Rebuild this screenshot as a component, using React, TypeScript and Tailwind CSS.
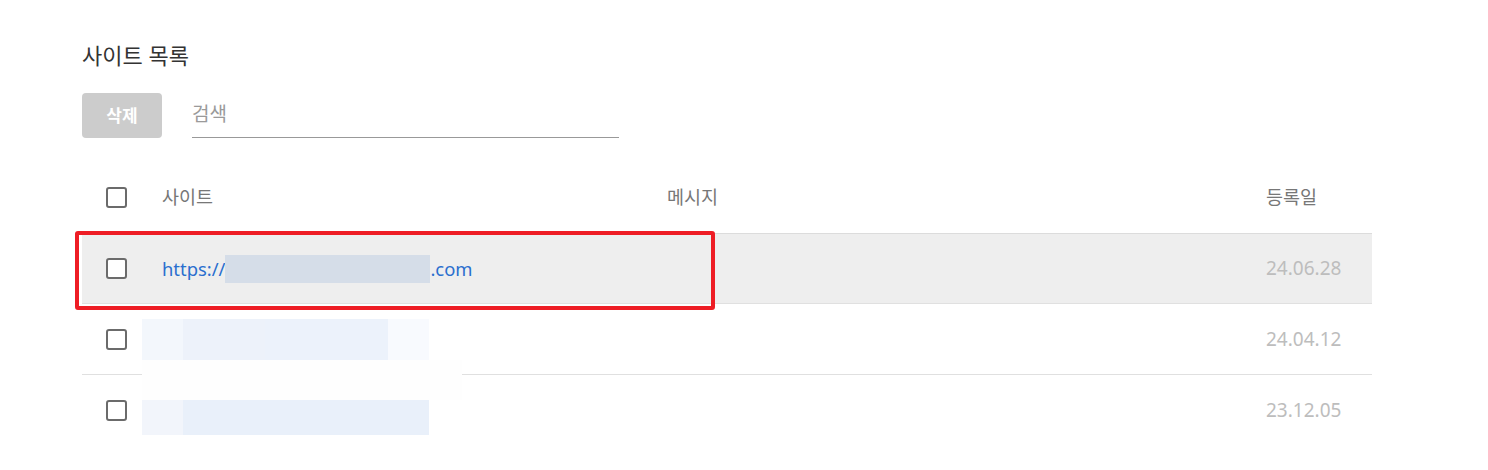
import React from 'react';

const font = { fontFamily: '"Noto Sans", "Noto Sans CJK KR", sans-serif' };

const Checkbox = () => (
  <span className="block w-[21px] h-[21px] border-2 border-[#6b6b6b] rounded-[3px] bg-white" />
);

type Row = { date: string; selected?: boolean };

const rows: Row[] = [
  { date: '24.06.28', selected: true },
  { date: '24.04.12' },
  { date: '23.12.05' },
];

export default function App() {
  return (
    <div className="w-[1488px] h-[470px] bg-white overflow-hidden" style={font}>
      <div className="pl-[82px] pr-[116px] pt-[39px]">
        <h2 className="text-[22px] leading-[32px] text-[#333]">사이트 목록</h2>

        {/* toolbar */}
        <div className="flex items-end gap-[30px] mt-[22px]">
          <button className="w-[80px] h-[45px] rounded-[4px] bg-[#cccccc] text-white text-[17px] font-bold">
            삭제
          </button>
          <div className="w-[427px] h-[45px] border-b border-[#999] flex items-center">
            <span className="text-[19px] text-[#9a9a9a] -mt-[1px]">검색</span>
          </div>
        </div>

        {/* table */}
        <div className="mt-[23px]">
          <div className="flex items-center h-[72px] text-[18.5px] text-[#777]">
            <div className="w-[80px] pl-[24px]">
              <Checkbox />
            </div>
            <div className="w-[505px]">사이트</div>
            <div className="w-[599px]">메시지</div>
            <div className="flex-1">등록일</div>
          </div>

          {rows.map((r, i) => (
            <div
              key={i}
              className={`relative flex items-center h-[71px] ${i < rows.length - 1 ? 'border-b border-[#e0e0e0]' : ''} ${
                r.selected ? 'bg-[#eeeeee] border-t border-t-[#dcdcdc]' : ''
              }`}
            >
              <div className="w-[80px] pl-[24px]">
                <Checkbox />
              </div>
              <div className="w-[505px] text-[18.4px] text-[#2a6fce]">
                {r.selected && (
                  <span className="flex items-center">
                    https://
                    <span className="inline-block w-[205px] h-[28px] bg-[#d5dde8]" />
                    .com
                  </span>
                )}
              </div>
              <div className="w-[599px]" />
              <div className="flex-1 text-[19px] text-[#bdbdbd]">{r.date}</div>

              {r.selected && (
                <div className="absolute left-[-7px] top-[-3px] w-[640px] h-[79px] border-[4px] border-[#ee1d25] rounded-[3px] pointer-events-none" />
              )}
              {i === 1 && (
                <>
                  <div className="absolute left-[60px] top-[15px] h-[41px] flex pointer-events-none">
                    <span className="w-[41px] bg-[#f3f7fc]" />
                    <span className="w-[82px] bg-[#edf2fa]" />
                    <span className="w-[123px] bg-[#ecf2fb]" />
                    <span className="w-[41px] bg-[#f8fafe]" />
                  </div>
                  <div className="absolute left-[60px] top-[56px] w-[320px] h-[40px] bg-[#fefefe] pointer-events-none z-10" />
                </>
              )}
              {i === 2 && (
                <div className="absolute left-[60px] top-[25px] h-[35px] flex pointer-events-none">
                  <span className="w-[41px] bg-[#f2f5fb]" />
                  <span className="w-[246px] bg-[#e9f0fa]" />
                </div>
              )}
            </div>
          ))}
        </div>
      </div>
    </div>
  );
}
